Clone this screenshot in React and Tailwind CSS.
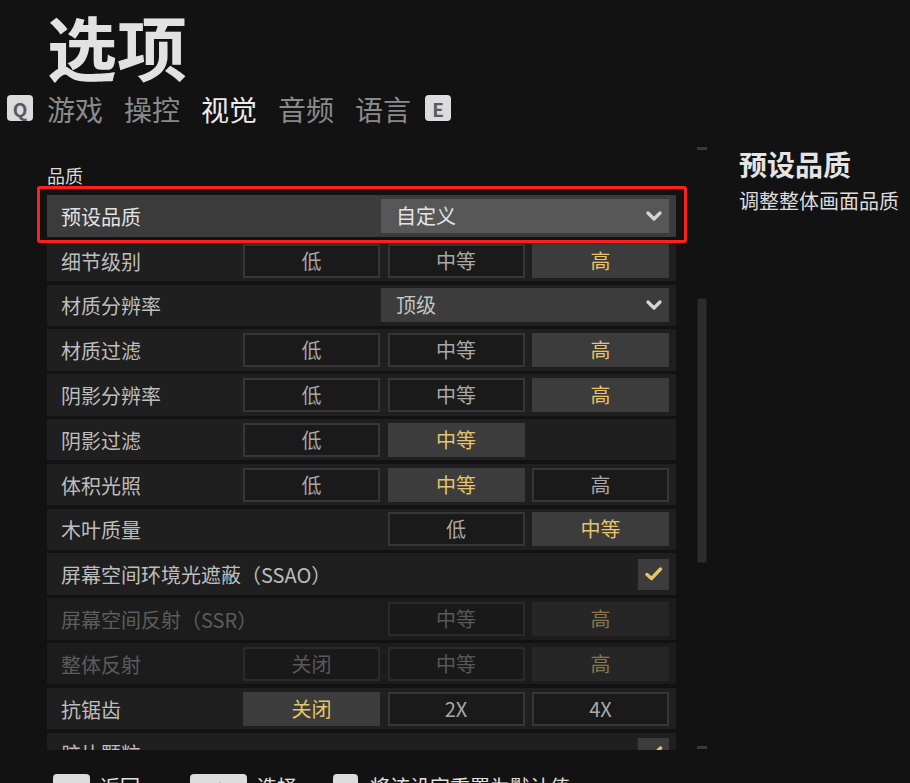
import React from 'react';

const rows = [
  { label: '细节级别', type: 'seg', opts: ['低', '中等', '高'], sel: 2 },
  { label: '材质分辨率', type: 'drop', value: '顶级' },
  { label: '材质过滤', type: 'seg', opts: ['低', '中等', '高'], sel: 2 },
  { label: '阴影分辨率', type: 'seg', opts: ['低', '中等', '高'], sel: 2 },
  { label: '阴影过滤', type: 'seg', opts: ['低', '中等', null], sel: 1 },
  { label: '体积光照', type: 'seg', opts: ['低', '中等', '高'], sel: 1 },
  { label: '木叶质量', type: 'seg', opts: [null, '低', '中等'], sel: 2 },
  { label: '屏幕空间环境光遮蔽（SSAO）', type: 'check' },
  { label: '屏幕空间反射（SSR）', type: 'seg', opts: [null, '中等', '高'], sel: 2, disabled: true },
  { label: '整体反射', type: 'seg', opts: ['关闭', '中等', '高'], sel: 2, disabled: true },
  { label: '抗锯齿', type: 'seg', opts: ['关闭', '2X', '4X'], sel: 0 },
  { label: '胶片颗粒', type: 'check' },
];

function Chevron() {
  return (
    <svg width="16" height="10" viewBox="0 0 16 10" className="shrink-0">
      <polyline points="2,2 8,8 14,2" fill="none" stroke="#d6d6d6" strokeWidth="3.2" strokeLinecap="round" strokeLinejoin="round" />
    </svg>
  );
}

function Check() {
  return (
    <div className="w-[31px] h-[31px] shrink-0 bg-[#3c3c3c] flex items-center justify-center">
      <svg width="20" height="16" viewBox="0 0 20 16">
        <polyline points="3,8.5 7.5,12.5 16.5,3" fill="none" stroke="#e8c468" strokeWidth="3.4" strokeLinecap="round" strokeLinejoin="round" />
      </svg>
    </div>
  );
}

function Dropdown({ value, hl }) {
  return (
    <div className={`w-[288px] h-[34px] shrink-0 flex items-center justify-between pl-[15px] pr-[7px] ${hl ? 'bg-[#575757] text-[#e4e4e4]' : 'bg-[#3c3c3c] text-[#c4c4c4]'}`}>
      <span className="text-[20px] leading-[20px]">{value}</span>
      <Chevron />
    </div>
  );
}

function Seg({ opts, sel, disabled }) {
  return (
    <div className="grid shrink-0 grid-cols-[137px_137px_137px] gap-x-[7.5px]">
      {opts.map((o, i) => {
        if (o === null) return <div key={i} />;
        let cls;
        if (disabled) {
          cls = i === sel ? 'bg-[#262626] text-[#86774d]' : 'border-2 border-[#2a2a2a] bg-[#191919] text-[#585858]';
        } else {
          cls = i === sel ? 'bg-[#3c3c3c] text-[#e6c467]' : 'border-2 border-[#363636] bg-[#1a1a1a] text-[#a8a8a8]';
        }
        return (
          <div key={i} className={`h-[34px] flex items-center justify-center text-[20px] leading-[20px] ${cls}`}>
            {o}
          </div>
        );
      })}
    </div>
  );
}

function Row({ r }) {
  return (
    <div className={`h-[41.5px] shrink-0 flex items-center pl-[14px] pr-[7px] ${r.disabled ? 'bg-[#1c1c1c]' : 'bg-[#1f1f1f]'}`}>
      <span className={`flex-1 min-w-0 pt-[2px] text-[20px] leading-[20px] whitespace-nowrap ${r.disabled ? 'text-[#5c5c5c]' : 'text-[#bdbdbd]'}`}>{r.label}</span>
      {r.type === 'seg' && <Seg opts={r.opts} sel={r.sel} disabled={r.disabled} />}
      {r.type === 'drop' && <Dropdown value={r.value} />}
      {r.type === 'check' && <Check />}
    </div>
  );
}

function Key({ children, w, big }) {
  return (
    <div className={`${w} h-[26px] rounded-[4px] bg-[#dcdcdc] flex items-center justify-center ${big ? 'text-[19px]' : 'text-[15px]'} font-bold text-[#5a5a5a] leading-none shrink-0`}>
      {children}
    </div>
  );
}

export default function App() {
  return (
    <div className="w-[910px] h-[783px] overflow-hidden bg-[#121212] font-['Noto_Sans_CJK_SC','Noto_Sans',sans-serif] text-[#e0e0e0]">
      {/* Title */}
      <div className="pt-[11px] pl-[47px] text-[70px] leading-[70px] font-bold text-[#e2e2e2]">选项</div>
      {/* Tabs */}
      <div className="mt-[13px] pl-[7px] flex items-center h-[28px]">
        <Key w="w-[26px]" big>Q</Key>
        <div className="ml-[14px] flex gap-x-[21px] text-[28px] leading-[28px] pt-[2px]">
          <span className="text-[#8a8a8a]">游戏</span>
          <span className="text-[#8a8a8a]">操控</span>
          <span className="text-[#ececec]">视觉</span>
          <span className="text-[#8a8a8a]">音频</span>
          <span className="text-[#8a8a8a]">语言</span>
        </div>
        <div className="ml-[14px]">
          <Key w="w-[26px]" big>E</Key>
        </div>
      </div>

      {/* Body */}
      <div className="mt-[25px] pl-[47px] flex h-[603px]">
        <div className="w-[629px] h-full overflow-x-visible overflow-y-clip flex flex-col pt-[19px]">
          <div className="text-[18px] leading-[18px] text-[#dadada] mb-[11px]">品质</div>
          <div className="flex flex-col gap-y-[3.3px]">
            <div className="relative h-[41.5px] shrink-0">
              <div className="h-full flex items-center pl-[14px] pr-[7px] bg-[#3b3b3b]">
                <span className="flex-1 pt-[2px] text-[20px] leading-[20px] text-[#e2e2e2]">预设品质</span>
                <Dropdown value="自定义" hl />
              </div>
              <div className="absolute -left-[10px] -right-[11px] -top-[9px] -bottom-[6.5px] border-[3px] border-[#ff1f1f] rounded-[3px] pointer-events-none" />
            </div>
            {rows.map((r, i) => (
              <Row key={i} r={r} />
            ))}
          </div>
        </div>

        {/* Scrollbar */}
        <div className="ml-[21px] w-[10px] h-full flex flex-col">
          <div className="h-[3px] bg-[#3a3a3a]" />
          <div className="mt-[148px] h-[265px] bg-[#2c2c2c] border border-[#1d1d1d]" />
          <div className="flex-1" />
          <div className="h-[3px] bg-[#3a3a3a] mb-[1px]" />
        </div>

        {/* Right description */}
        <div className="ml-[32px] flex-1 pt-[3px]">
          <div className="text-[28px] leading-[28px] font-bold text-[#e4e4e4]">预设品质</div>
          <div className="mt-[13px] text-[20px] leading-[20px] text-[#dcdcdc] whitespace-nowrap">调整整体画面品质</div>
        </div>
      </div>

      {/* Bottom hints */}
      <div className="pt-[24px] pl-[53px] flex items-center text-[20px] leading-[20px] text-[#e0e0e0]">
        <Key w="w-[37px]">Esc</Key>
        <span className="ml-[10px]">返回</span>
        <div className="ml-[50px]"><Key w="w-[57px]">Enter</Key></div>
        <span className="ml-[10px]">选择</span>
        <div className="ml-[36px]"><Key w="w-[25px]">R</Key></div>
        <span className="ml-[12px]">将该设定重置为默认值</span>
      </div>
    </div>
  );
}
